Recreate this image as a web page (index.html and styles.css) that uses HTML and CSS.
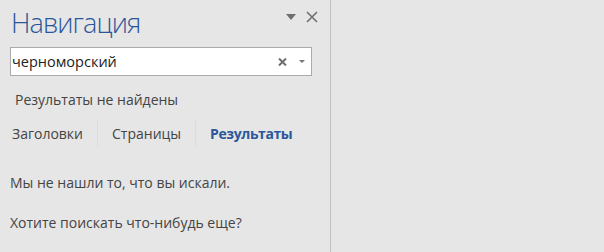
FILE: index.html
```html
<!DOCTYPE html>
<html lang="ru">
<head>
    <meta charset="UTF-8">
    <title>Навигация</title>
    <link rel="stylesheet" href="styles.css">
</head>
<body>
    <div class="layout">
        <div class="nav-pane">
            <div class="pane-header">
                <h1>Навигация</h1>
                <div class="pane-actions">
                    <span class="menu-arrow"></span>
                    <svg class="close-icon" width="12" height="12" viewBox="0 0 12 12">
                        <path d="M1 1 L11 11 M11 1 L1 11" stroke="#707070" stroke-width="1.6" fill="none"/>
                    </svg>
                </div>
            </div>
            <div class="search-box">
                <span class="search-text">черноморский</span>
                <svg class="clear-icon" width="9" height="8" viewBox="0 0 9 8">
                    <path d="M1 0.5 L8 7.5 M8 0.5 L1 7.5" stroke="#6e6e6e" stroke-width="2" fill="none"/>
                </svg>
                <span class="search-arrow"></span>
            </div>
            <div class="status">Результаты не найдены</div>
            <div class="tabs">
                <div class="tab">Заголовки</div>
                <div class="tab">Страницы</div>
                <div class="tab active">Результаты</div>
            </div>
            <div class="message">
                <p>Мы не нашли то, что вы искали.</p>
                <p>Хотите поискать что-нибудь еще?</p>
            </div>
        </div>
        <div class="doc-area"></div>
    </div>
</body>
</html>
```

FILE: styles.css
```css
body {
    margin: 0;
    background-color: #e6e6e6;
    font-family: 'Open Sans', 'Noto Sans', sans-serif;
    color: #444;
}
.layout {
    display: flex;
    height: 252px;
}
.nav-pane {
    width: 330px;
    border-right: 1px solid #c2c2c2;
    overflow: hidden;
}
.doc-area {
    flex: 1;
}
.pane-header {
    display: flex;
    justify-content: space-between;
    align-items: flex-start;
    height: 47px;
}
h1 {
    margin: 4px 0 0 11px;
    font-size: 27px;
    font-weight: 300;
    letter-spacing: -0.9px;
    color: #2b579a;
}
.pane-actions {
    display: flex;
    align-items: center;
    gap: 10px;
    margin: 11px 12px 0 0;
}
.menu-arrow {
    width: 0;
    height: 0;
    border-left: 5px solid transparent;
    border-right: 5px solid transparent;
    border-top: 6px solid #6e6e6e;
}
.search-box {
    display: flex;
    align-items: center;
    width: 300px;
    height: 27px;
    margin-left: 10px;
    background: #fff;
    border: 1px solid #ababab;
}
.search-text {
    flex: 1;
    padding-left: 1px;
    font-size: 14.5px;
    color: #222;
}
.clear-icon {
    margin-right: 12px;
}
.search-arrow {
    width: 0;
    height: 0;
    margin-right: 6px;
    border-left: 3px solid transparent;
    border-right: 3px solid transparent;
    border-top: 3px solid #777;
}
.status {
    margin: 14px 0 0 15px;
    font-size: 14px;
}
.tabs {
    display: flex;
    margin: 10px 0 0 0;
}
.tab {
    padding: 5px 14px 3px 12px;
    font-size: 14px;
    border-right: 1px solid #dcdcdc;
}
.tab + .tab {
    padding-left: 14px;
}
.tab.active {
    border-right: none;
    font-weight: bold;
    letter-spacing: -0.4px;
    color: #2b579a;
}
.message {
    margin: 27px 0 0 10px;
    font-size: 14px;
}
.message p {
    margin: 0 0 21px 0;
}
```
